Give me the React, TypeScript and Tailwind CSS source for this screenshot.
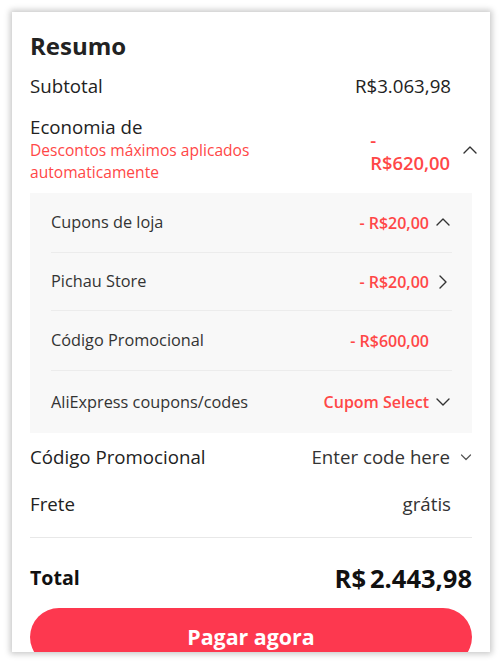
import React from "react";

const Chevron = ({ dir, className = "" }: { dir: "up" | "down" | "right"; className?: string }) => {
  const d =
    dir === "up" ? "M2 10 L8 4 L14 10" : dir === "down" ? "M2 5 L8 11 L14 5" : "M5 2 L11 8 L5 14";
  return (
    <svg width="16" height="16" viewBox="0 0 16 16" className={className} fill="none">
      <path d={d} stroke="#333" strokeWidth="1.4" strokeLinecap="round" strokeLinejoin="round" />
    </svg>
  );
};

export default function App() {
  return (
    <div className="w-[500px] h-[663px] bg-white p-3" style={{ fontFamily: '"Open Sans", sans-serif' }}>
      <div className="h-[640px] w-[478px] overflow-hidden bg-white shadow-[0_0_6px_2px_rgba(0,0,0,0.22)] px-[18px] pt-[20px] text-[#222]">
        <div className="text-[24px] font-bold leading-[28px]">Resumo</div>
        <div className="mt-[14px] flex items-center justify-between text-[18.7px] leading-[24px]">
          <span>Subtotal</span>
          <span className="mr-[21px]">R$3.063,98</span>
        </div>
        <div className="mt-[17px] flex items-start justify-between">
          <div>
            <div className="text-[18.7px] leading-[24px]">Economia de</div>
            <div className="text-[15.6px] leading-[22px] text-[#ff4747] w-[260px]">Descontos máximos aplicados automaticamente</div>
          </div>
          <div className="flex items-center gap-[12px] mt-[13px]">
            <div className="text-[18.4px] font-semibold leading-[23px] text-[#ff4747] text-left">
              -<br />R$620,00
            </div>
            <Chevron dir="up" className="mr-[-6px]" />
          </div>
        </div>
        <div className="mt-[10px] bg-[#f8f8f8] pl-[21px] pr-[20px]">
          {[
            { l: "Cupons de loja", r: "- R$20,00", icon: "up" as const, h: 60 },
            { l: "Pichau Store", r: "- R$20,00", icon: "right" as const, h: 58 },
            { l: "Código Promocional", r: "- R$600,00", icon: null, h: 60 },
            { l: "AliExpress coupons/codes", r: "Cupom Select", icon: "down" as const, h: 62 },
          ].map((row, i, arr) => (
            <div
              key={i}
              className={`flex items-center justify-between ${i < arr.length - 1 ? "border-b border-[#ececec]" : ""}`}
              style={{ height: row.h }}
            >
              <span className="text-[#333] text-[16.3px]">{row.l}</span>
              <span className="flex items-center gap-[5px]">
                <span className="font-semibold text-[#ff4747] text-[16px]">{row.r}</span>
                <span className="w-[18px] flex justify-center">{row.icon && <Chevron dir={row.icon} />}</span>
              </span>
            </div>
          ))}
        </div>
        <div className="mt-[12px] flex items-center justify-between text-[18.7px] leading-[24px]">
          <span>Código Promocional</span>
          <span className="flex items-center gap-[10px] text-[#333]">
            Enter code here
            <svg width="12" height="12" viewBox="0 0 12 12" fill="none">
              <path d="M1.5 4 L6 8.5 L10.5 4" stroke="#555" strokeWidth="1.2" strokeLinecap="round" strokeLinejoin="round" />
            </svg>
          </span>
        </div>
        <div className="mt-[23px] flex items-center justify-between text-[18.7px] leading-[24px]">
          <span>Frete</span>
          <span className="mr-[21px] text-[#333]">grátis</span>
        </div>
        <div className="mt-[21px] border-t border-[#e8e8e8]" />
        <div className="mt-[24px] flex items-center justify-between h-[32px] text-[#111]">
          <span className="text-[19.6px] font-bold">Total</span>
          <span className="text-[25.5px] font-bold">R$<span className="ml-[4px]">2.443,98</span></span>
        </div>
        <button className="mt-[14px] h-[58px] w-full rounded-full bg-[#fd384f] text-[21.4px] font-bold text-white flex items-center justify-center">
          Pagar agora
        </button>
      </div>
    </div>
  );
}
